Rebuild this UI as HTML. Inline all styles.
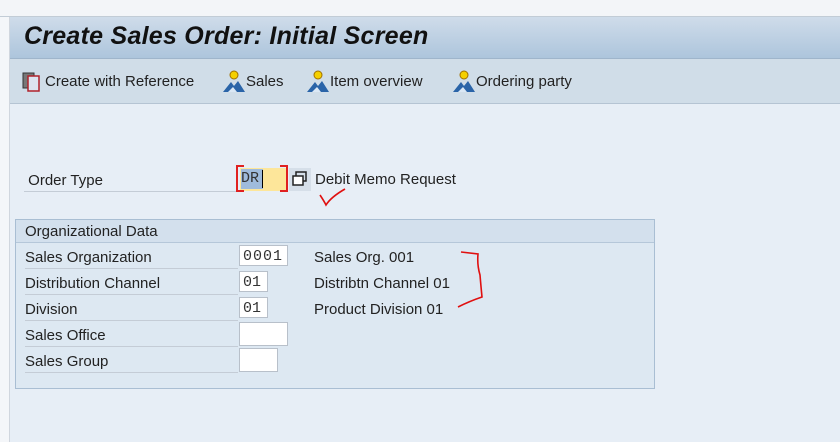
<!DOCTYPE html>
<html><head><style>
body{margin:0;width:840px;height:442px;overflow:hidden;background:#fff;font-family:"Liberation Sans",sans-serif;position:relative}
.a{position:absolute}
.t{font-size:15px;color:#222;white-space:nowrap}
.lab{position:absolute;left:25px;width:213px;height:25px;border-bottom:1px solid #c4ccd6;font-size:15px;color:#222;line-height:29px;white-space:nowrap}
.inp{position:absolute;left:239px;height:21px;background:#fff;border:1px solid #b8c0ca;font-family:"Liberation Mono",monospace;font-size:15px;line-height:21px;padding-left:3px;box-sizing:border-box;color:#333}
</style></head><body>
<div class="a" style="left:0;top:0;width:840px;height:16px;background:#f3f5f8;border-bottom:1px solid #c2ccd6"></div>
<div class="a" style="left:0;top:17px;width:9px;height:425px;background:#f4f6f9;border-right:1px solid #d0d6de"></div>
<div class="a" style="left:10px;top:17px;width:830px;height:41px;background:linear-gradient(#cfdcea,#adc5dc);border-bottom:1px solid #9fb5cb"></div>
<div class="a" style="left:24px;top:22px;font-size:25px;font-weight:bold;font-style:italic;color:#111;letter-spacing:0.25px">Create Sales Order: Initial Screen</div>
<div class="a" style="left:10px;top:59px;width:830px;height:44px;background:#d0dde8;border-bottom:1px solid #b5c4d3"></div>
<svg class="a" style="left:22px;top:71px" width="22" height="22"><rect x="1" y="2" width="11" height="15" fill="#777" stroke="#333"/><rect x="6" y="5" width="11" height="15" fill="#dde4f0" stroke="#b0222a" stroke-width="1.5"/></svg>
<div class="a t" style="left:45px;top:73px">Create with Reference</div>
<svg class="a" style="left:222px;top:69px" width="24" height="24"><circle cx="12" cy="6" r="4" fill="#f5d000" stroke="#a07000"/><path d="M1 23 L9 13 L12 17 L16 12 L23 23 Z" fill="#2a64a8"/><path d="M6 23 L11 18 L15 23Z" fill="#dbe8f5"/></svg>
<div class="a t" style="left:246px;top:73px">Sales</div>
<svg class="a" style="left:306px;top:69px" width="24" height="24"><circle cx="12" cy="6" r="4" fill="#f5d000" stroke="#a07000"/><path d="M1 23 L9 13 L12 17 L16 12 L23 23 Z" fill="#2a64a8"/><path d="M6 23 L11 18 L15 23Z" fill="#dbe8f5"/></svg>
<div class="a t" style="left:330px;top:73px">Item overview</div>
<svg class="a" style="left:452px;top:69px" width="24" height="24"><circle cx="12" cy="6" r="4" fill="#f5d000" stroke="#a07000"/><path d="M1 23 L9 13 L12 17 L16 12 L23 23 Z" fill="#2a64a8"/><path d="M6 23 L11 18 L15 23Z" fill="#dbe8f5"/></svg>
<div class="a t" style="left:476px;top:73px">Ordering party</div>
<div class="a" style="left:10px;top:104px;width:830px;height:338px;background:#e7eef6"></div>
<div class="lab" style="top:166px;left:24px;width:214px">&nbsp;Order Type</div>
<div class="a" style="left:240px;top:168px;width:46px;height:23px;background:#fde69a"></div>
<div class="a" style="left:241px;top:169px;width:22px;height:20px;background:#9fbbdc;font-family:'Liberation Mono',monospace;font-size:15px;line-height:20px;color:#333">DR</div>
<div class="a" style="left:262px;top:170px;width:1px;height:18px;background:#000"></div>
<div class="a" style="left:236px;top:165px;width:52px;height:27px;border:2px solid #e02020;box-sizing:border-box;clip-path:polygon(0 0,8px 0,8px 100%,0 100%,0 0,100% 0,100% 100%,calc(100% - 8px) 100%,calc(100% - 8px) 0)"></div>
<div class="a" style="left:289px;top:168px;width:22px;height:23px;background:#d6dfe9"></div>
<svg class="a" style="left:292px;top:171px" width="16" height="16"><rect x="4" y="1" width="10" height="9" fill="none" stroke="#222" stroke-width="1.5"/><rect x="1" y="5" width="10" height="9" fill="#fff" stroke="#222" stroke-width="1.5"/></svg>
<div class="a t" style="left:315px;top:171px">Debit Memo Request</div>
<svg class="a" style="left:315px;top:185px" width="40" height="25"><path d="M5 10 Q9 16 11 20 Q16 12 30 4" fill="none" stroke="#e01010" stroke-width="1.6"/></svg>
<div class="a" style="left:15px;top:219px;width:640px;height:170px;background:#dde8f2;border:1px solid #a9bed3;box-sizing:border-box"></div>
<div class="a" style="left:16px;top:220px;width:638px;height:22px;background:#d3e0ed;border-bottom:1px solid #b5c7d9"></div>
<div class="a t" style="left:25px;top:223px">Organizational Data</div>
<div class="lab" style="top:243px">Sales Organization</div>
<div class="lab" style="top:269px">Distribution Channel</div>
<div class="lab" style="top:295px">Division</div>
<div class="lab" style="top:321px">Sales Office</div>
<div class="lab" style="top:347px">Sales Group</div>
<div class="inp" style="top:245px;width:49px;letter-spacing:1px">0001</div>
<div class="inp" style="top:271px;width:29px">01</div>
<div class="inp" style="top:297px;width:29px">01</div>
<div class="inp" style="top:322px;width:49px;height:24px"></div>
<div class="inp" style="top:348px;width:39px;height:24px"></div>
<div class="a t" style="left:314px;top:249px">Sales Org. 001</div>
<div class="a t" style="left:314px;top:275px">Distribtn Channel 01</div>
<div class="a t" style="left:314px;top:301px">Product Division 01</div>
<svg class="a" style="left:450px;top:245px" width="45" height="70"><path d="M11 7 L28 9 Q27 20 30 30 Q31 42 32 52 Q20 56 8 62" fill="none" stroke="#e01010" stroke-width="1.6"/></svg>
</body></html>
